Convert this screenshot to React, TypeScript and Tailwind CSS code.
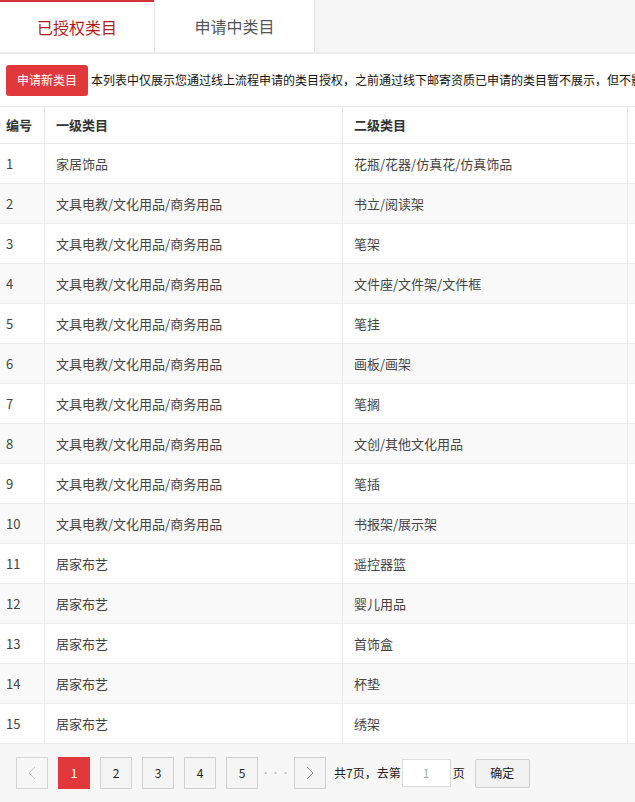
import React from "react";

const rows: [string, string][] = [
  ["家居饰品", "花瓶/花器/仿真花/仿真饰品"],
  ["文具电教/文化用品/商务用品", "书立/阅读架"],
  ["文具电教/文化用品/商务用品", "笔架"],
  ["文具电教/文化用品/商务用品", "文件座/文件架/文件框"],
  ["文具电教/文化用品/商务用品", "笔挂"],
  ["文具电教/文化用品/商务用品", "画板/画架"],
  ["文具电教/文化用品/商务用品", "笔搁"],
  ["文具电教/文化用品/商务用品", "文创/其他文化用品"],
  ["文具电教/文化用品/商务用品", "笔插"],
  ["文具电教/文化用品/商务用品", "书报架/展示架"],
  ["居家布艺", "遥控器篮"],
  ["居家布艺", "婴儿用品"],
  ["居家布艺", "首饰盒"],
  ["居家布艺", "杯垫"],
  ["居家布艺", "绣架"],
];

const font = { fontFamily: '"Noto Sans CJK SC", "Noto Sans", sans-serif' };

export default function App() {
  return (
    <div className="w-[635px] h-[802px] overflow-hidden bg-white text-[#333]" style={font}>
      {/* Tabs */}
      <div className="flex h-[54px] bg-[#f6f6f6] border-b-2 border-[#ebebeb]">
        <div className="w-[154px] bg-white border-t-2 border-[#d5343a] flex items-center justify-center text-[16px] text-[#b51a21]">
          已授权类目
        </div>
        <div className="w-[161px] bg-white border-l border-r border-[#e6e6e6] flex items-center justify-center text-[16px] text-[#555]">
          申请中类目
        </div>
      </div>

      {/* Notice */}
      <div className="h-[52px] flex items-center pl-[6px] whitespace-nowrap overflow-hidden">
        <button className="h-[31px] w-[82px] shrink-0 rounded-[3px] bg-[#e0383b] text-white text-[12px]">申请新类目</button>
        <span className="ml-[3px] text-[12px] text-[#111]">
          本列表中仅展示您通过线上流程申请的类目授权，之前通过线下邮寄资质已申请的类目暂不展示，但不影
        </span>
      </div>

      {/* Table */}
      <div className="w-[740px]">
        <div className="flex h-[38px] border-t border-b border-[#e8e8e8] text-[13px] font-semibold text-[#333]">
          <div className="w-[45px] shrink-0 pl-[6px] flex items-center border-r border-[#e8e8e8]">编号</div>
          <div className="w-[298px] shrink-0 pl-[11px] flex items-center border-r border-[#e8e8e8]">一级类目</div>
          <div className="w-[285px] shrink-0 pl-[11px] flex items-center border-r border-[#e8e8e8]">二级类目</div>
          <div className="flex-1" />
        </div>
        {rows.map(([a, b], i) => (
          <div
            key={i}
            className={`flex h-[40px] border-b border-[#ececec] text-[13px] text-[#444] ${i % 2 === 1 ? "bg-[#f9f9f9]" : "bg-white"}`}
          >
            <div className="w-[45px] shrink-0 pl-[6px] flex items-center border-r border-[#ececec]">{i + 1}</div>
            <div className="w-[298px] shrink-0 pl-[11px] flex items-center border-r border-[#ececec]">{a}</div>
            <div className="w-[285px] shrink-0 pl-[11px] flex items-center border-r border-[#ececec]">{b}</div>
            <div className="flex-1" />
          </div>
        ))}
      </div>

      {/* Pagination */}
      <div className="h-[58px] bg-[#f7f7f7] flex items-center pl-[16px] text-[12px]">
        <div className="w-[32px] h-[32px] border border-[#d5d5d5] bg-[#f7f7f7] flex items-center justify-center text-[#c8c8c8]">
          <svg width="8" height="14" viewBox="0 0 8 14" fill="none" stroke="currentColor" strokeWidth="1">
            <path d="M7 1 L1 7 L7 13" />
          </svg>
        </div>
        <div className="ml-[10px] w-[32px] h-[32px] bg-[#e0383b] text-white flex items-center justify-center">1</div>
        {[2, 3, 4, 5].map((n) => (
          <div key={n} className="ml-[10px] w-[32px] h-[32px] border border-[#d0d0d0] bg-[#f5f5f5] text-[#222] flex items-center justify-center">
            {n}
          </div>
        ))}
        <div className="w-[36px] text-center text-[#bbb] text-[9px] tracking-[1px]">···</div>
        <div className="w-[32px] h-[32px] border border-[#d0d0d0] bg-[#f5f5f5] flex items-center justify-center text-[#888]">
          <svg width="8" height="14" viewBox="0 0 8 14" fill="none" stroke="currentColor" strokeWidth="1">
            <path d="M1 1 L7 7 L1 13" />
          </svg>
        </div>
        <span className="ml-[8px] text-[#222]">共7页，去第</span>
        <div className="ml-[1px] w-[49px] h-[28px] border border-[#dcdcdc] bg-white flex items-center justify-center text-[#aaa]">1</div>
        <span className="ml-[2px] text-[#222]">页</span>
        <button className="ml-[10px] w-[55px] h-[29px] border border-[#d0d0d0] rounded-[2px] bg-[#f2f2f2] text-[#222]">确定</button>
      </div>
    </div>
  );
}
